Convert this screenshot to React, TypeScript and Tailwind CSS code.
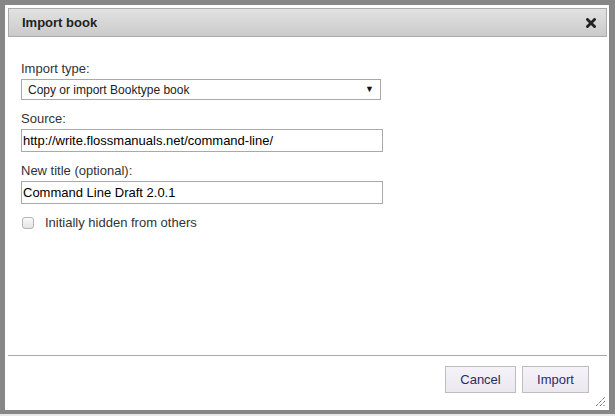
import React from "react";

const font = { fontFamily: '"Liberation Sans", Arial, sans-serif' };

function Field({ label, children }: { label: string; children: React.ReactNode }) {
  return (
    <div className="flex flex-col">
      <label className="text-[13px] leading-[15px] text-[#333] mb-[3px]">{label}</label>
      {children}
    </div>
  );
}

export default function App() {
  return (
    <div className="w-[615px] h-[416px] flex flex-col bg-[#e9e9e9]" style={font}>
      <div className="h-[414px] bg-[#878787] pt-[5px] pl-[5px] pr-[6px] pb-[4px]">
        <div className="relative h-full bg-white flex flex-col pt-[3px] pl-[3px] pr-[2px]">
          {/* Title bar */}
          <div className="h-[29px] flex items-center justify-between border border-[#aaa] bg-gradient-to-b from-[#e2e2e2] to-[#cacaca] pl-[13px] pr-[10px]">
            <span className="text-[13px] font-bold text-[#222]">Import book</span>
            <svg width="10" height="10" viewBox="0 0 10 10">
              <path d="M1.5 1.5 L8.5 8.5 M8.5 1.5 L1.5 8.5" stroke="#222" strokeWidth="2.8" strokeLinecap="square" />
            </svg>
          </div>

          {/* Form */}
          <div className="flex flex-col gap-[11px] pl-[13px] pt-[24px] flex-1">
            <Field label="Import type:">
              <div className="w-[360px] h-[21px] border border-[#a9a9a9] flex items-center justify-between pl-[6px] pr-[6px]">
                <span className="text-[12px] text-[#222]">Copy or import Booktype book</span>
                <span className="text-[9px] text-[#111]">▼</span>
              </div>
            </Field>
            <Field label="Source:">
              <input
                readOnly
                value="http://write.flossmanuals.net/command-line/"
                className="w-[362px] h-[23px] border border-[#a9a9a9] px-[1px] text-[13px] text-black outline-none"
                style={font}
              />
            </Field>
            <Field label="New title (optional):">
              <input
                readOnly
                value="Command Line Draft 2.0.1"
                className="w-[362px] h-[23px] border border-[#a9a9a9] px-[1px] text-[13px] text-black outline-none"
                style={font}
              />
            </Field>
            <div className="flex items-center -mt-[2px] pl-[1px]">
              <span className="w-[12px] h-[12px] rounded-[3px] border border-[#b5b5b5] bg-gradient-to-b from-[#fafafa] to-[#e4e4e4]" />
              <span className="ml-[11px] text-[13px] text-[#333]">Initially hidden from others</span>
            </div>
          </div>

          {/* Footer */}
          <div className="h-[55px] border-t border-[#aaa] flex justify-end items-start pt-[10px] pr-[18px] gap-[6px]">
            <button className="h-[27px] w-[71px] border border-[#bdbdbd] bg-gradient-to-b from-[#f5f3f8] to-[#ebe8f0] text-[13px] text-[#2d2a66]">
              Cancel
            </button>
            <button className="h-[27px] w-[67px] border border-[#bdbdbd] bg-gradient-to-b from-[#f5f3f8] to-[#ebe8f0] text-[13px] text-[#2d2a66]">
              Import
            </button>
          </div>

          {/* Resize grip */}
          <svg className="absolute right-[3px] bottom-[3px]" width="11" height="11" viewBox="0 0 11 11">
            <path d="M1 10 L10 1 M5 10 L10 5 M8.5 10 L10 8.5" stroke="#333" strokeWidth="1" strokeDasharray="1 1" />
          </svg>
        </div>
      </div>
    </div>
  );
}
